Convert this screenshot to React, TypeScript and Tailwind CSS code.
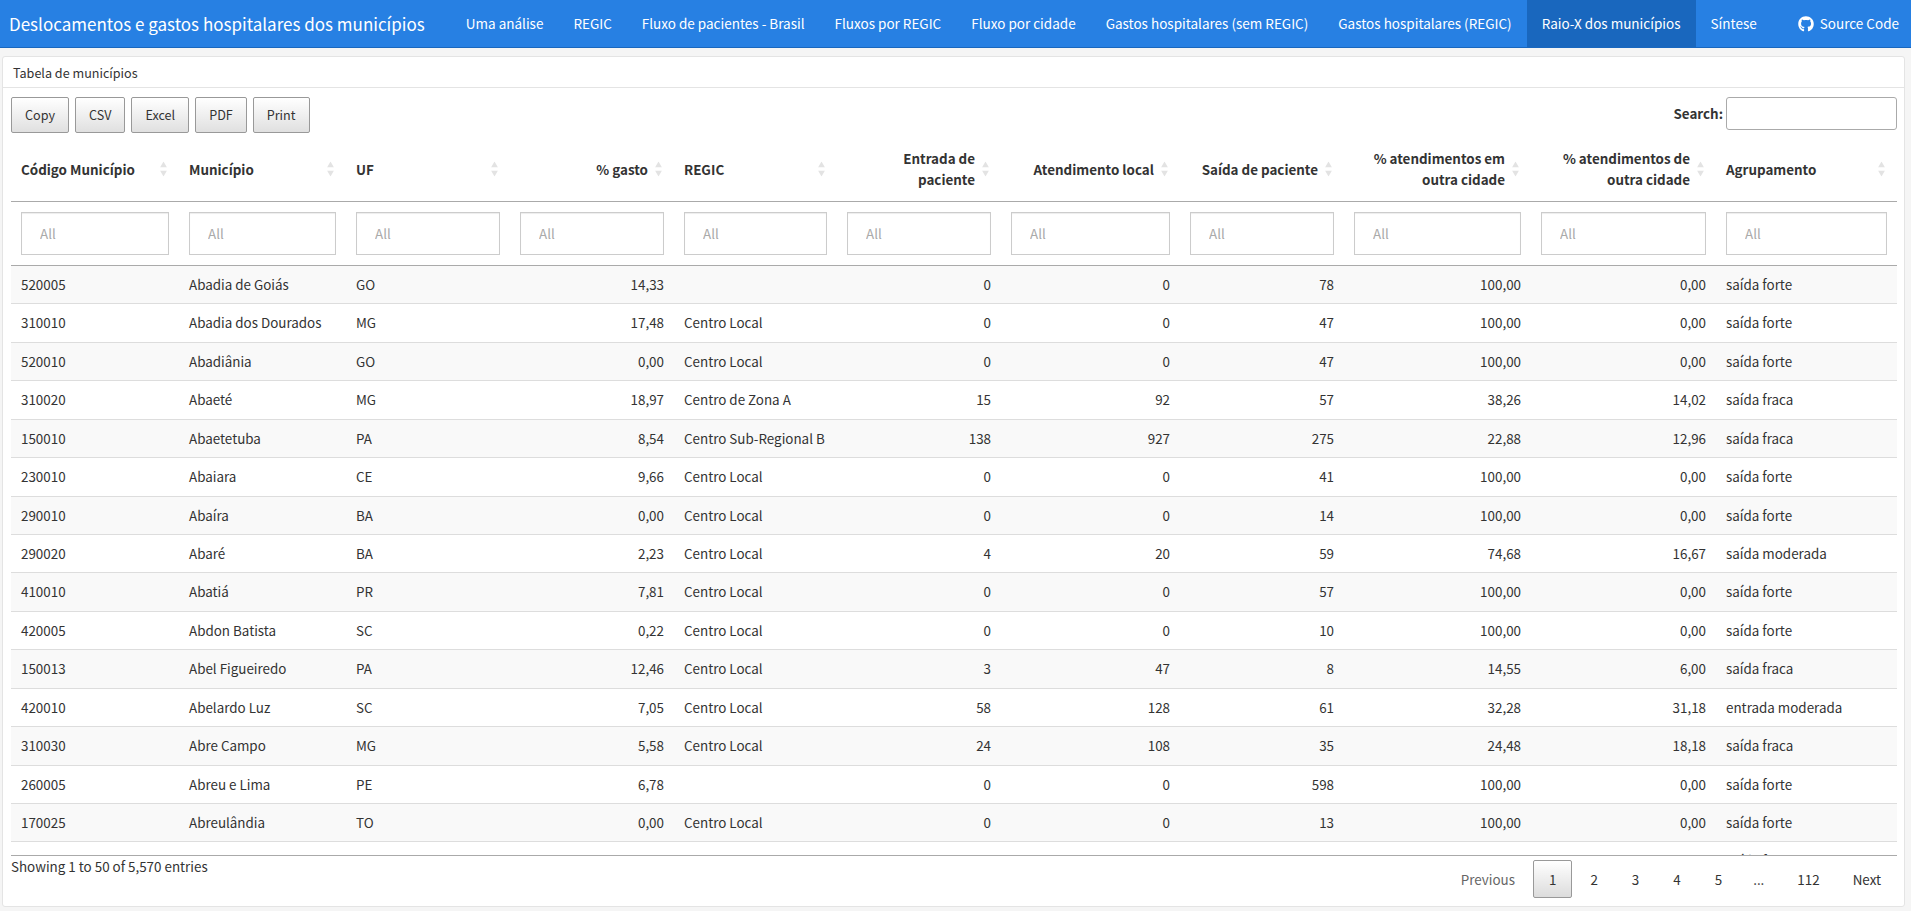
import { FaGithub } from "react-icons/fa";

const navItems = [
  "Uma análise",
  "REGIC",
  "Fluxo de pacientes - Brasil",
  "Fluxos por REGIC",
  "Fluxo por cidade",
  "Gastos hospitalares (sem REGIC)",
  "Gastos hospitalares (REGIC)",
  "Raio-X dos municípios",
  "Síntese",
];

const columns = [
  { label: "Código Município", width: "w-[168px]", right: false },
  { label: "Município", width: "w-[167px]", right: false },
  { label: "UF", width: "w-[164px]", right: false },
  { label: "% gasto", width: "w-[164px]", right: true },
  { label: "REGIC", width: "w-[163px]", right: false },
  { label: "Entrada de paciente", width: "w-[164px]", right: true },
  { label: "Atendimento local", width: "w-[179px]", right: true },
  { label: "Saída de paciente", width: "w-[164px]", right: true },
  { label: "% atendimentos em outra cidade", width: "w-[187px]", right: true },
  { label: "% atendimentos de outra cidade", width: "w-[185px]", right: true },
  { label: "Agrupamento", width: "w-[181px]", right: false },
];

const rows = [
  ["520005", "Abadia de Goiás", "GO", "14,33", "", "0", "0", "78", "100,00", "0,00", "saída forte"],
  ["310010", "Abadia dos Dourados", "MG", "17,48", "Centro Local", "0", "0", "47", "100,00", "0,00", "saída forte"],
  ["520010", "Abadiânia", "GO", "0,00", "Centro Local", "0", "0", "47", "100,00", "0,00", "saída forte"],
  ["310020", "Abaeté", "MG", "18,97", "Centro de Zona A", "15", "92", "57", "38,26", "14,02", "saída fraca"],
  ["150010", "Abaetetuba", "PA", "8,54", "Centro Sub-Regional B", "138", "927", "275", "22,88", "12,96", "saída fraca"],
  ["230010", "Abaiara", "CE", "9,66", "Centro Local", "0", "0", "41", "100,00", "0,00", "saída forte"],
  ["290010", "Abaíra", "BA", "0,00", "Centro Local", "0", "0", "14", "100,00", "0,00", "saída forte"],
  ["290020", "Abaré", "BA", "2,23", "Centro Local", "4", "20", "59", "74,68", "16,67", "saída moderada"],
  ["410010", "Abatiá", "PR", "7,81", "Centro Local", "0", "0", "57", "100,00", "0,00", "saída forte"],
  ["420005", "Abdon Batista", "SC", "0,22", "Centro Local", "0", "0", "10", "100,00", "0,00", "saída forte"],
  ["150013", "Abel Figueiredo", "PA", "12,46", "Centro Local", "3", "47", "8", "14,55", "6,00", "saída fraca"],
  ["420010", "Abelardo Luz", "SC", "7,05", "Centro Local", "58", "128", "61", "32,28", "31,18", "entrada moderada"],
  ["310030", "Abre Campo", "MG", "5,58", "Centro Local", "24", "108", "35", "24,48", "18,18", "saída fraca"],
  ["260005", "Abreu e Lima", "PE", "6,78", "", "0", "0", "598", "100,00", "0,00", "saída forte"],
  ["170025", "Abreulândia", "TO", "0,00", "Centro Local", "0", "0", "13", "100,00", "0,00", "saída forte"],
  ["310040", "Acaiaca", "MG", "0,00", "Centro Local", "0", "0", "21", "100,00", "0,00", "saída forte"],
];

const exportButtons = ["Copy", "CSV", "Excel", "PDF", "Print"];
const pages = ["2", "3", "4", "5"];

function SortArrows() {
  return (
    <span className="absolute right-[12px] top-1/2 flex -translate-y-1/2 flex-col gap-[3px]" aria-hidden="true">
      <svg width="7" height="6" viewBox="0 0 7 6" className="fill-[#e3e3e3]">
        <path d="M3.5 0 7 6H0z" />
      </svg>
      <svg width="7" height="6" viewBox="0 0 7 6" className="fill-[#e3e3e3]">
        <path d="M0 0h7L3.5 6z" />
      </svg>
    </span>
  );
}

export default function App() {
  return (
    <div className="flex h-[911px] w-[1911px] flex-col overflow-hidden bg-[#f5f5f5] font-['Noto_Sans_CJK_SC','Liberation_Sans',sans-serif] text-[13.4px] leading-[21.43px] text-[#333]">
      <nav className="flex h-[48px] shrink-0 items-stretch whitespace-nowrap border-b border-[#1967be] bg-[#2780e3] text-[13.5px] text-white">
        <span className="ml-[9px] mr-[26px] flex items-center text-[17px]">
          Deslocamentos e gastos hospitalares dos municípios
        </span>
        {navItems.map((item) => (
          <a
            key={item}
            className={
              item === "Raio-X dos municípios"
                ? "flex items-center bg-[#1967be] px-[15px]"
                : "flex items-center px-[15px]"
            }
          >
            {item}
          </a>
        ))}
        <a className="ml-auto mr-[12px] flex items-center gap-[6px]">
          <FaGithub className="text-[16px]" />
          Source Code
        </a>
      </nav>

      <main className="flex flex-1 flex-col px-[2px] pb-[4px] pt-[8px]">
        <section className="mr-[4px] flex flex-1 flex-col rounded-[3px] border border-[#e4e4e4] bg-white">
          <header className="flex h-[31px] items-center border-b border-[#e4e4e4] px-[10px] pt-[2px] text-[12.6px] text-[#333]">
            Tabela de municípios
          </header>

          <div className="flex flex-1 flex-col pl-[8px] pr-[7px] pt-[9px]">
            <div className="flex items-start justify-between">
              <div className="flex gap-[6px]">
                {exportButtons.map((label) => (
                  <button
                    key={label}
                    className="h-[36px] rounded-[2px] border border-[#999] bg-gradient-to-b from-white to-[#e0e0e0] px-[13px] text-[12.6px] text-[#333]"
                  >
                    {label}
                  </button>
                ))}
              </div>
              <label className="flex items-center gap-[3px] font-semibold">
                Search:
                <input className="h-[33px] w-[171px] rounded-[3px] border border-[#aaa] bg-white" />
              </label>
            </div>

            <div className="mt-[5px] h-[718px] overflow-hidden border-b border-[#aaa]">
              <table className="w-[1886px] table-fixed border-collapse">
                <colgroup>
                  {columns.map((col) => (
                    <col key={col.label} className={col.width} />
                  ))}
                </colgroup>
                <thead>
                  <tr className="border-b border-[#aaa]">
                    {columns.map((col) => (
                      <th
                        key={col.label}
                        className={
                          col.right
                            ? "relative py-[10px] pl-[10px] pr-[26px] text-right font-semibold"
                            : "relative py-[10px] pl-[10px] pr-[26px] text-left font-semibold"
                        }
                      >
                        {col.label}
                        <SortArrows />
                      </th>
                    ))}
                  </tr>
                  <tr className="border-b border-[#aaa]">
                    {columns.map((col) => (
                      <td key={col.label} className="p-[10px]">
                        <input
                          placeholder="All"
                          className="block h-[43px] w-full border border-[#ccc] bg-white px-[18px] shadow-[inset_0_1px_1px_rgba(0,0,0,0.075)] placeholder:text-[#aaa]"
                        />
                      </td>
                    ))}
                  </tr>
                </thead>
                <tbody>
                  {rows.map((row, i) => (
                    <tr key={row[0]} className={i % 2 === 0 ? "border-b border-[#ddd] bg-[#f9f9f9]" : "border-b border-[#ddd]"}>
                      {row.map((cell, j) => (
                        <td
                          key={j}
                          className={
                            columns[j].right
                              ? "truncate px-[10px] py-[8px] text-right"
                              : "truncate px-[10px] py-[8px]"
                          }
                        >
                          {cell}
                        </td>
                      ))}
                    </tr>
                  ))}
                </tbody>
              </table>
            </div>

            <footer className="flex items-start justify-between">
              <span>Showing 1 to 50 of 5,570 entries</span>
              <div className="flex items-center gap-[2px] pt-[4px]">
                <a className="px-[16px] py-[8px] text-[#666]">Previous</a>
                <a className="rounded-[2px] border border-[#999] bg-gradient-to-b from-white to-[#dcdcdc] px-[15px] py-[7.5px]">1</a>
                {pages.map((p) => (
                  <a key={p} className="px-[16px] py-[8px]">{p}</a>
                ))}
                <span className="py-[8px] pl-[13px] pr-[15px]">...</span>
                <a className="py-[8px] pl-[16px] pr-[15px]">112</a>
                <a className="px-[16px] py-[8px]">Next</a>
              </div>
            </footer>
          </div>
        </section>
      </main>
    </div>
  );
}
